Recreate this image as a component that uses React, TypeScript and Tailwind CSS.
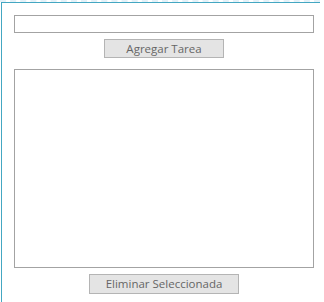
import React from "react";

export default function App() {
  return (
    <div className="h-[302px] w-[324px] bg-white font-['Open_Sans',sans-serif] text-[11.5px] text-[#666666]">
      <div className="h-[2px] w-[320px] border-t-2 border-dashed border-[#e3f1f8]" />
      <div className="ml-[1px] flex h-[300px] w-[319px] flex-col items-start border-l border-t border-[#44a7c2] pl-[12px] pt-[12px]">
        <div className="h-[18px] w-[300px] border border-[#a3a3a3] bg-white" />
        <button
          type="button"
          className="mt-[6px] ml-[90px] flex h-[19px] w-[120px] items-center justify-center border border-[#b4b4b4] bg-[#e4e4e4] leading-none"
        >
          Agregar Tarea
        </button>
        <div className="mt-[11px] h-[199px] w-[300px] border border-[#a3a3a3] bg-white" />
        <button
          type="button"
          className="mt-[6px] ml-[75px] flex h-[20px] w-[150px] items-center justify-center border border-[#b4b4b4] bg-[#e4e4e4] leading-none"
        >
          Eliminar Seleccionada
        </button>
      </div>
    </div>
  );
}
